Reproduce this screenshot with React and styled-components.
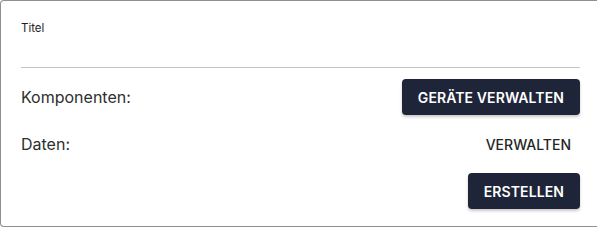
import React from 'react';
import styled, { createGlobalStyle } from 'styled-components';

const GlobalStyle = createGlobalStyle`
  html, body { margin: 0; padding: 0; background: #fff; overflow: hidden; }
  body { font-family: Inter, "Noto Sans", Arial, sans-serif; color: #2b2b2b; }
`;

const Card = styled.div`
  box-sizing: border-box;
  width: 600px;
  height: 227px;
  border: 1px solid #8f8f8f;
  border-right: none;
  border-radius: 4px 0 0 4px;
  padding: 0 20px 18px 20px;
  background: #fff;
  display: flex;
  flex-direction: column;
`;

const Field = styled.label`
  display: flex;
  flex-direction: column;
  padding-top: 19px;
  border-bottom: 1px solid #c4c4c4;
`;

const FieldLabel = styled.span`
  font-size: 11.5px;
  line-height: 16px;
  color: #1f1f1f;
`;

const FieldInput = styled.input`
  height: 31px;
  border: none;
  outline: none;
  padding: 0;
  font: inherit;
  font-size: 15px;
  background: transparent;
`;

const Row = styled.div`
  display: flex;
  align-items: center;
  justify-content: ${p => (p.$end ? 'flex-end' : 'space-between')};
  margin-top: 11px;
  height: 36px;
`;

const RowLabel = styled.span`
  font-size: 16px;
  color: #2e2e2e;
`;

const Button = styled.button`
  height: 36px;
  padding: 0 ${p => (p.$variant === 'text' ? '9px' : '16px')};
  border: none;
  border-radius: 4px;
  font-family: Inter, "Noto Sans", Arial, sans-serif;
  font-size: 14px;
  font-weight: ${p => (p.$variant === 'text' ? 500 : 600)};
  letter-spacing: ${p => (p.$variant === 'text' ? '0' : '0.1px')};
  text-transform: uppercase;
  cursor: pointer;
  background: ${p => (p.$variant === 'text' ? 'transparent' : '#1f2538')};
  color: ${p => (p.$variant === 'text' ? '#262626' : '#ffffff')};
  box-shadow: ${p => (p.$variant === 'text' ? 'none' : '0 2px 3px rgba(0, 0, 0, 0.22)')};
`;

export default function App() {
  return (
    <>
      <GlobalStyle />
      <Card>
        <Field>
          <FieldLabel>Titel</FieldLabel>
          <FieldInput type="text" />
        </Field>
        <Row>
          <RowLabel>Komponenten:</RowLabel>
          <Button>Geräte verwalten</Button>
        </Row>
        <Row>
          <RowLabel>Daten:</RowLabel>
          <Button $variant="text">Verwalten</Button>
        </Row>
        <Row $end>
          <Button>Erstellen</Button>
        </Row>
      </Card>
    </>
  );
}
